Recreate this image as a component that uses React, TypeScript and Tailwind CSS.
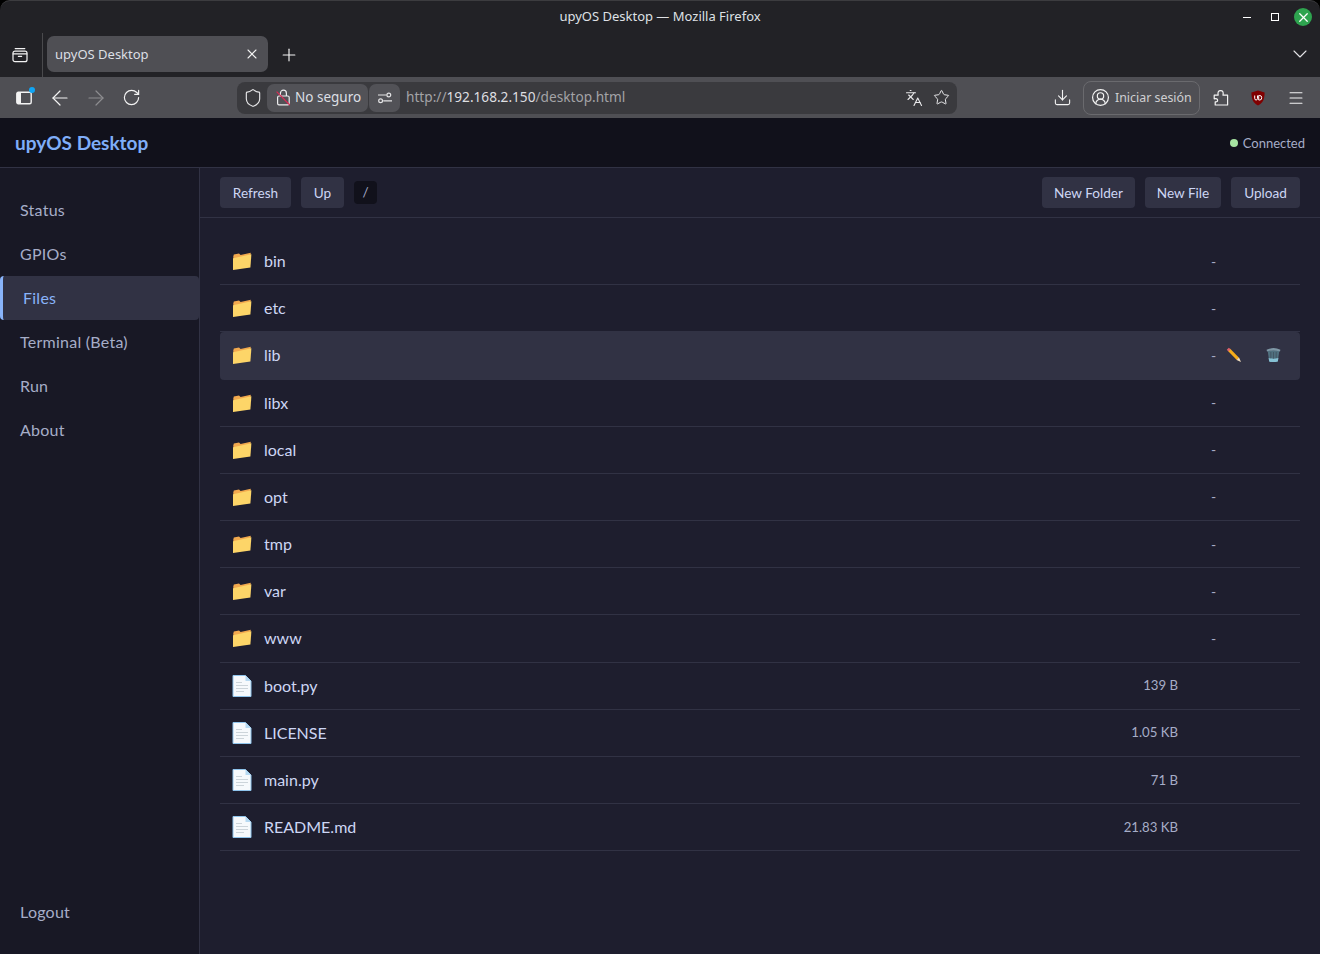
import {
  ArrowLeft,
  ArrowRight,
  ChevronDown,
  CircleUserRound,
  Download,
  Languages,
  Menu,
  Plus,
  RotateCw,
  Shield,
  Star,
  X,
} from "lucide-react";

const navItems = ["Status", "GPIOs", "Files", "Terminal (Beta)", "Run", "About"];

const entries = [
  { name: "bin", dir: true },
  { name: "etc", dir: true },
  { name: "lib", dir: true, hover: true },
  { name: "libx", dir: true },
  { name: "local", dir: true },
  { name: "opt", dir: true },
  { name: "tmp", dir: true },
  { name: "var", dir: true },
  { name: "www", dir: true },
  { name: "boot.py", size: "139 B" },
  { name: "LICENSE", size: "1.05 KB" },
  { name: "main.py", size: "71 B" },
  { name: "README.md", size: "21.83 KB" },
];

function FolderIcon() {
  return (
    <svg width="20" height="20" viewBox="0 0 20 20" className="shrink-0">
      <path d="M1.2 6 1.8 3.4 7 2.4 8.6 4 18.8 1.8 18.4 5 2 9Z" fill="#f2a94e" />
      <path d="M1 19 1 7.2 19.4 3.2 18.4 16.4Z" fill="#fdd568" />
    </svg>
  );
}

function FileIcon() {
  return (
    <svg width="20" height="22" viewBox="0 0 20 22" className="shrink-0">
      <path d="M1 .5H13.5L19 6V21.5H1Z" fill="#f6f9fc" stroke="#8fc4ec" strokeWidth="1" />
      <path d="M13.5.5V6H19Z" fill="#b6d9f2" />
      <path d="M4 7.5H10M4 10.5H16M4 13.5H16M4 16.5H12" stroke="#ccd4da" strokeWidth="1" />
    </svg>
  );
}

function PencilIcon() {
  return (
    <svg width="16" height="16" viewBox="0 0 16 16">
      <path d="M4.2 1.8 13 10.8 10.8 13 2 4Z" fill="#f6ad1b" />
      <path d="M.8 2.8 2.8.8 4.6 2.2 2.4 4.4Z" fill="#e0626a" />
      <path d="M13 10.6 15 15 10.6 13Z" fill="#f3dfc0" />
    </svg>
  );
}

function TrashIcon() {
  return (
    <svg width="15" height="16" viewBox="0 0 15 16">
      <path d="M1.6 3.2 3.2 14.4Q7.5 15.8 11.8 14.4L13.4 3.2Z" fill="#50707f" />
      <path d="M2.6 11 3.2 14.4Q7.5 15.8 11.8 14.4L12.4 11Q7.5 12.4 2.6 11Z" fill="#86c1d4" />
      <path d="M.6 2.8Q7.5 -.6 14.4 2.8L14 4.4Q7.5 2.6 1 4.4Z" fill="#7f98a6" />
      <path d="M4.8 5V11M7.5 5V11.5M10.2 5V11" stroke="#40525f" strokeWidth=".8" />
    </svg>
  );
}

function FirefoxView() {
  return (
    <svg width="16" height="16" viewBox="0 0 16 16" fill="none" stroke="#f3f3f3" strokeWidth="1.2">
      <path d="M3.2 1.6H12.8" strokeLinecap="round" />
      <rect x="1" y="4.1" width="14" height="10.6" rx="2" />
      <path d="M1.2 6.9H14.8M6.4 9.4H9.6" strokeLinecap="round" />
    </svg>
  );
}

function SidebarToggle() {
  return (
    <div className="relative">
      <svg width="16" height="14" viewBox="0 0 16 14" fill="none">
        <rect x=".8" y="1.2" width="14.4" height="11.6" rx="1.5" stroke="#f3f3f3" strokeWidth="1.4" />
        <rect x="1" y="1.2" width="4" height="11.6" fill="#f3f3f3" />
      </svg>
      <span className="absolute -right-[3px] -top-[4px] size-[6px] rounded-full bg-[#10a5f5]" />
    </div>
  );
}

function InsecureLock() {
  return (
    <svg width="15" height="17" viewBox="0 0 15 17" fill="none" stroke="#ececee" strokeWidth="1.2">
      <path d="M4.4 7V4.2a3 3 0 0 1 6 0V7" />
      <rect x="1.6" y="7" width="11.6" height="8.8" rx="1.4" />
      <path d="M.6 2.6 13.8 16" stroke="#d92a55" strokeWidth="1.2" />
    </svg>
  );
}

function PermissionsIcon() {
  return (
    <svg width="16" height="16" viewBox="0 0 16 16" fill="none" stroke="#e4e4e6" strokeWidth="1.2">
      <circle cx="11.8" cy="5" r="1.9" />
      <circle cx="3.6" cy="10.8" r="1.9" />
      <path d="M1 5H9.4M6.2 10.8H15" />
    </svg>
  );
}

function ExtensionsIcon() {
  return (
    <svg width="16" height="17" viewBox="0 0 16 17" fill="none" stroke="#f3f3f3" strokeWidth="1.2" strokeLinejoin="round">
      <path d="M2.2 16H14.6V6.2H10Q11 1.6 7.6 1.6T5.2 6.2H1.2V9.8Q4.6 9.2 4.6 11.2T2.2 12.8Z" />
    </svg>
  );
}

function UblockIcon() {
  return (
    <svg width="14" height="16" viewBox="0 0 14 16">
      <path d="M7 .5 13.6 2.4C13.6 8.5 12 13 7 15.5 2 13 .4 8.5.4 2.4Z" fill="#800000" />
      <path d="M3.7 5.5V8.4Q3.7 10 5.1 10T6.5 8.4V5.5M7.7 5.5V10H8.8Q10.7 10 10.7 7.75T8.8 5.5Z" fill="none" stroke="#fff" strokeWidth="1" />
    </svg>
  );
}

function BrowserChrome() {
  return (
    <div className="shrink-0 font-['Noto_Sans',sans-serif]">
      <div className="rounded-t-[10px] border-t border-[#3c3c3f] bg-[#222226]">
        <div className="relative flex h-[32px] items-center justify-end pr-[8px]">
          <span className="absolute inset-x-0 text-center text-[13px] text-[#dfe1e5]">upyOS Desktop — Mozilla Firefox</span>
          <span className="relative h-px w-2 bg-white" />
          <span className="relative ml-[20px] size-2 border border-white" />
          <span className="relative ml-[15px] flex size-[18px] items-center justify-center rounded-full bg-[#2ea44f]">
            <X size={15} color="#fff" strokeWidth={2} />
          </span>
        </div>
        <div className="flex h-[44px] items-start">
          <div className="flex h-[44px] w-[43px] items-center justify-center border-r border-[#4a4a4d] pr-[2px]">
            <FirefoxView />
          </div>
          <div className="ml-[4px] mt-[3px] flex h-[36px] w-[221px] items-center justify-between rounded-[7px] bg-[#4f4f54] pl-[8px] pr-[8px]">
            <span className="pt-[1px] text-[13px] text-[#dcdfe4]">upyOS Desktop</span>
            <X size={16} color="#f3f3f3" strokeWidth={1.6} />
          </div>
          <div className="ml-[11px] mt-[12px]">
            <Plus size={20} color="#f3f3f3" strokeWidth={1.4} />
          </div>
          <div className="ml-auto mr-[8px] mt-[9px]">
            <ChevronDown size={24} color="#e4e4e6" strokeWidth={1.1} />
          </div>
        </div>
      </div>
      <div className="flex h-[41px] items-center bg-[#4f4f54]">
        <div className="ml-[16px] flex w-[221px] items-center">
          <SidebarToggle />
          <ArrowLeft size={24} color="#f3f3f3" strokeWidth={1.2} className="ml-[16px]" />
          <ArrowRight size={24} color="#8d8d90" strokeWidth={1.2} className="ml-[12px]" />
          <RotateCw size={19} color="#f3f3f3" strokeWidth={1.5} className="ml-[14px]" />
        </div>
        <div className="flex h-[32px] w-[720px] items-center rounded-[8px] bg-[#3a3a3e] pl-[6px] pr-[7px]">
          <Shield size={20} color="#e4e4e6" strokeWidth={1.4} />
          <div className="ml-[4px] flex h-[28px] w-[101px] items-center gap-[4px] rounded-[7px] bg-[#525257] pl-[9px]">
            <InsecureLock />
            <span className="pb-[1px] text-[13.5px] text-[#dcdfe4]">No seguro</span>
          </div>
          <div className="ml-px flex h-[28px] w-[31px] items-center justify-center rounded-[7px] bg-[#525257]">
            <PermissionsIcon />
          </div>
          <span className="ml-[6px] flex-1 pb-[1px] text-[13.65px] text-[#a3a3a6]">
            http://<span className="text-[#dfdfe1]">192.168.2.150</span>/desktop.html
          </span>
          <Languages size={18} color="#e8e8ea" strokeWidth={1.5} />
          <Star size={17} color="#e8e8ea" strokeWidth={1.4} className="ml-[10px]" />
        </div>
        <div className="ml-[96px]">
          <Download size={19} color="#f3f3f3" strokeWidth={1.4} />
        </div>
        <div className="ml-[11px] flex h-[34px] w-[117px] items-center gap-[5px] rounded-[8px] border border-[#6a6a6e] pl-[7px]">
          <CircleUserRound size={19} color="#f3f3f3" strokeWidth={1.5} />
          <span className="pt-[1px] text-[12.4px] text-[#cfcfd2]">Iniciar sesión</span>
        </div>
        <div className="ml-[13px]">
          <ExtensionsIcon />
        </div>
        <div className="ml-[22px]">
          <UblockIcon />
        </div>
        <div className="ml-[22px]">
          <Menu size={18} color="#f3f3f3" strokeWidth={1.4} />
        </div>
      </div>
    </div>
  );
}

export default function App() {
  return (
    <div className="flex h-[954px] w-[1320px] flex-col overflow-hidden bg-black">
      <BrowserChrome />

      <div className="flex min-h-0 flex-1 flex-col font-['Lato',sans-serif]">
        <header className="flex h-[50px] shrink-0 items-center justify-between border-b border-[#313244] bg-[#11111b] px-[15px]">
          <h1 className="pt-[2px] text-[19px] font-bold text-[#7fadf8]">upyOS Desktop</h1>
          <div className="flex items-center gap-[5px] text-[13px] text-[#a6adc8]">
            <span className="size-2 rounded-full bg-[#a6e3a1]" />
            <span className="pt-[2px]">Connected</span>
          </div>
        </header>

        <div className="flex min-h-0 flex-1">
          <aside className="flex w-[200px] shrink-0 flex-col border-r border-[#313244] bg-[#181825] pb-[20px] pt-[20px]">
            {navItems.map((item) =>
              item === "Files" ? (
                <div
                  key={item}
                  className="flex h-[44px] items-center rounded-[4px] border-l-[3px] border-[#89b4fa] bg-[#313244] pl-[20px] text-[16px] tracking-[0.25px] text-[#89b4fa]"
                >
                  {item}
                </div>
              ) : (
                <div key={item} className="flex h-[44px] items-center pl-[20px] text-[16px] tracking-[0.25px] text-[#a6adc8]">
                  {item}
                </div>
              ),
            )}
            <div className="mt-auto flex h-[44px] items-center pl-[20px] text-[16px] tracking-[0.25px] text-[#a6adc8]">Logout</div>
          </aside>

          <main className="min-w-0 flex-1 bg-[#1e1e2e]">
            <div className="flex h-[50px] items-center gap-[10px] border-b border-[#313244] px-[20px] text-[13.6px] text-[#cdd6f4]">
              <button className="h-[31px] w-[71px] rounded-[4px] bg-[#313244] pt-[2px]">Refresh</button>
              <button className="h-[31px] w-[43px] rounded-[4px] bg-[#313244] pt-[2px]">Up</button>
              <span className="flex h-[23px] w-[23px] items-center justify-center rounded-[4px] bg-[#11111b] text-[#a6adc8]">/</span>
              <button className="ml-auto h-[31px] w-[93px] rounded-[4px] bg-[#313244] pt-[2px]">New Folder</button>
              <button className="h-[31px] w-[76px] rounded-[4px] bg-[#313244] pt-[2px]">New File</button>
              <button className="h-[31px] w-[69px] rounded-[4px] bg-[#313244] pt-[2px]">Upload</button>
            </div>

            <div className="px-[20px] pt-[20px]">
              {entries.map((entry) => (
                <div
                  key={entry.name}
                  className={
                    entry.hover
                      ? "flex h-[47.18px] items-center gap-[12px] rounded-[4px] border-b border-transparent bg-[#313244] pl-[12px] text-[16px] text-[#cdd6f4]"
                      : "flex h-[47.18px] items-center gap-[12px] border-b border-[#313244] pl-[12px] text-[16px] text-[#cdd6f4]"
                  }
                >
                  {entry.dir ? <FolderIcon /> : <FileIcon />}
                  <span className="flex-1">{entry.name}</span>
                  {entry.size && <span className="mr-[122px] pt-[1px] text-[13.2px] text-[#a6adc8]">{entry.size}</span>}
                  {entry.dir && (
                    <div className="flex w-[89px] items-center text-[14px] text-[#a6adc8]">
                      <span className="w-[15px]">-</span>
                      {entry.hover && (
                        <>
                          <PencilIcon />
                          <span className="ml-[24px]">
                            <TrashIcon />
                          </span>
                        </>
                      )}
                    </div>
                  )}
                </div>
              ))}
            </div>
          </main>
        </div>
      </div>
    </div>
  );
}
